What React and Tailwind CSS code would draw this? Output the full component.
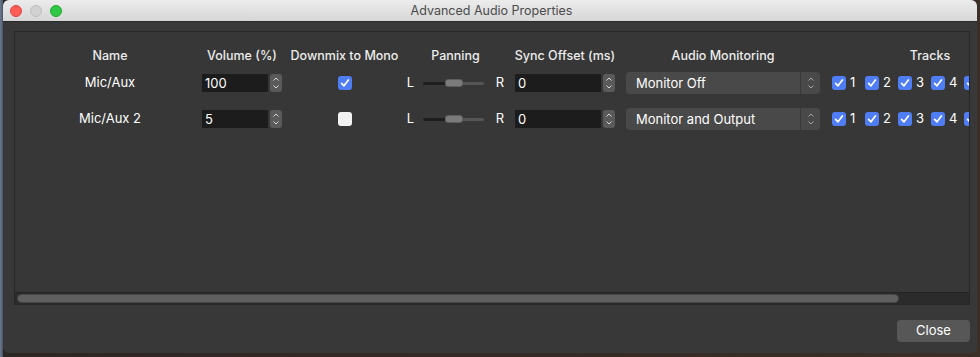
import React from "react";

const font = { fontFamily: 'Inter, "Noto Sans", "Liberation Sans", sans-serif' };

function Stepper() {
  return (
    <div className="w-[12px] h-[18px] ml-[2px] rounded-[3px] bg-[#5a5a5a] flex items-center justify-center">
      <svg width="12" height="18" viewBox="0 0 12 18">
        <path d="M3.5 6.5 L6 4 L8.5 6.5" fill="none" stroke="#d8d8d8" strokeWidth="1" />
        <path d="M3.5 11.5 L6 14 L8.5 11.5" fill="none" stroke="#d8d8d8" strokeWidth="1" />
      </svg>
    </div>
  );
}

function SpinBox({ value, width }) {
  return (
    <div className="flex items-center h-[18px]">
      <div
        className="h-[18px] bg-[#1c1c1c] text-white text-[13px] leading-[18px] pl-[3px]"
        style={{ width }}
      >
        {value}
      </div>
      <Stepper />
    </div>
  );
}

function Check({ checked }) {
  if (!checked) {
    return <div className="w-[14px] h-[14px] rounded-[3px] bg-[#f2f2f2]" />;
  }
  return (
    <div className="w-[14px] h-[14px] shrink-0 rounded-[3px] bg-[#4f7df5] flex items-center justify-center">
      <svg width="14" height="14" viewBox="0 0 14 14">
        <path d="M3.6 7.3 L6 9.8 L10.4 3.9" fill="none" stroke="#ffffff" strokeWidth="1.7" strokeLinecap="round" strokeLinejoin="round" />
      </svg>
    </div>
  );
}

function Slider() {
  return (
    <div className="flex items-center w-[61px] h-[10px]">
      <div className="w-[22px] h-[3px] bg-[#1e1e1e] rounded-l-full" />
      <div className="w-[18px] h-[8px] rounded-[3px] bg-[#7b7b7b] border border-[#5e5e5e]" />
      <div className="w-[21px] h-[3px] bg-[#555555] rounded-r-full" />
    </div>
  );
}

function Select({ label }) {
  return (
    <div className="w-[194px] h-[22px] rounded-[4px] bg-[#494949] flex items-center">
      <div className="flex-1 pl-[10px] text-white text-[13px] leading-[22px]">{label}</div>
      <div className="w-[1px] h-[22px] bg-[#383838]" />
      <div className="w-[19px] h-[22px] flex items-center justify-center">
        <svg width="10" height="16" viewBox="0 0 10 16">
          <path d="M2.5 5.5 L5 3 L7.5 5.5" fill="none" stroke="#a8a8a8" strokeWidth="1" />
          <path d="M2.5 10.5 L5 13 L7.5 10.5" fill="none" stroke="#a8a8a8" strokeWidth="1" />
        </svg>
      </div>
    </div>
  );
}

function Tracks() {
  return (
    <div className="flex items-center pl-[7px]">
      {[1, 2, 3, 4].map((n) => (
        <div key={n} className="w-[33px] flex items-center">
          <Check checked />
          <span className="ml-[4px] text-white text-[13px]">{n}</span>
        </div>
      ))}
      <div className="w-[33px] flex items-center">
        <Check checked />
      </div>
    </div>
  );
}

const cols = "grid grid-cols-[174px_90px_115px_107px_112px_204px_210px]";

function Row({ name, volume, mono, monitor }) {
  return (
    <div className={`${cols} h-[22px] items-center text-white text-[13px]`}>
      <div className="flex justify-center">{name}</div>
      <div className="flex justify-center">
        <SpinBox value={volume} width="66px" />
      </div>
      <div className="flex justify-center">
        <Check checked={mono} />
      </div>
      <div className="flex justify-center items-center">
        <span className="w-[6px]">L</span>
        <span className="ml-[10px]"><Slider /></span>
        <span className="ml-[12px]">R</span>
      </div>
      <div className="flex justify-center">
        <SpinBox value="0" width="86px" />
      </div>
      <div className="flex justify-center">
        <Select label={monitor} />
      </div>
      <div className="flex justify-start">
        <Tracks />
      </div>
    </div>
  );
}

export default function App() {
  return (
    <div
      className="w-[980px] h-[357px] overflow-hidden bg-[linear-gradient(90deg,#6d7a93_0px,#4b5264_3px,#2e2623_3px,#3b2f28_100%)]"
      style={font}
    >
      <div className="ml-[3px] w-[974px] h-[353px] rounded-[6px] bg-[#383838] flex flex-col overflow-hidden">
        {/* title bar */}
        <div className="h-[22px] shrink-0 bg-[linear-gradient(180deg,#ececec,#d6d6d6)] border-b border-[#2a2a2a] flex items-center">
          <div className="flex items-center gap-[8px] pl-[7px]">
            <div className="w-[12px] h-[12px] rounded-full bg-[#fc5d55] border border-[#e0443c]" />
            <div className="w-[12px] h-[12px] rounded-full bg-[#d1d1d1] border border-[#bdbdbd]" />
            <div className="w-[12px] h-[12px] rounded-full bg-[#33c748] border border-[#1fa82f]" />
          </div>
          <div className="flex-1 text-center text-[12.5px] text-[#4b4b4b] pr-[56px] leading-[22px]">
            Advanced Audio Properties
          </div>
        </div>

        {/* panel */}
        <div className="ml-[11px] mt-[9px] w-[956px] h-[274px] border border-[#262626] bg-[#373737] flex flex-col overflow-hidden">
          <div className="flex-1 overflow-hidden pl-[8px]">
            <div className="w-[1100px]">
              <div className={`${cols} mt-[13px] h-[22px] items-center text-[#ececec] text-[12.5px] font-medium`}>
                <div className="flex justify-center">Name</div>
                <div className="flex justify-center">Volume (%)</div>
                <div className="flex justify-center whitespace-nowrap">Downmix to Mono</div>
                <div className="flex justify-center">Panning</div>
                <div className="flex justify-center whitespace-nowrap">Sync Offset (ms)</div>
                <div className="flex justify-center">Audio Monitoring</div>
                <div className="flex justify-center">Tracks</div>
              </div>
              <div className="mt-[5px]">
                <Row name="Mic/Aux" volume="100" mono monitor="Monitor Off" />
              </div>
              <div className="mt-[14px]">
                <Row name="Mic/Aux 2" volume="5" mono={false} monitor="Monitor and Output" />
              </div>
            </div>
          </div>
          {/* horizontal scrollbar */}
          <div className="h-[12px] shrink-0 bg-[#2b2b2b] border-t border-[#242424] flex items-center pl-[2px]">
            <div className="w-[882px] h-[9px] rounded-full bg-[#5f5f5f] border border-[#474747]" />
          </div>
        </div>

        {/* footer */}
        <div className="flex justify-end pr-[7px] mt-[15px]">
          <div className="w-[73px] h-[22px] rounded-[4px] bg-[#575757] text-white text-[13px] flex items-center justify-center">
            Close
          </div>
        </div>
      </div>
    </div>
  );
}
